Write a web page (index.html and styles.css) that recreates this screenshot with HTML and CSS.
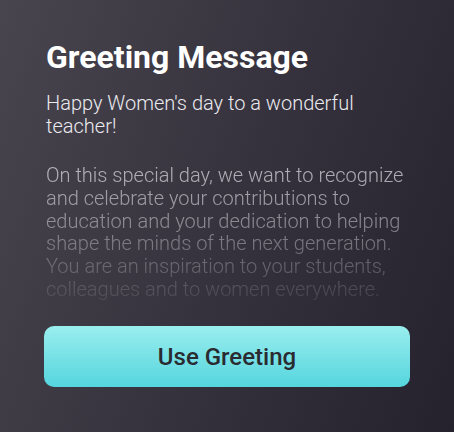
FILE: index.html
```html
<!DOCTYPE html>
<html>
<head>
<meta charset="utf-8">
<link rel="stylesheet" href="styles.css">
</head>
<body>
<main class="sheet">
  <h1 class="title">Greeting Message</h1>
  <div class="message">
    <p class="lead">Happy Women's day to a wonderful teacher!</p>
    <p class="body">On this special day, we want to recognize and celebrate your contributions to education and your dedication to helping shape the minds of the next generation. You are an inspiration to your students, colleagues and to women everywhere.</p>
  </div>
  <button class="cta">Use Greeting</button>
</main>
</body>
</html>
```
FILE: styles.css
```css
html, body {
  margin: 0;
  padding: 0;
  height: 100%;
}
body {
  background: linear-gradient(110deg, #48454f 0%, #34313c 55%, #25222d 100%);
  font-family: Roboto, "Noto Sans", sans-serif;
  overflow: hidden;
}
.sheet {
  display: flex;
  flex-direction: column;
  padding: 37px 44px 0 44px;
}
.title {
  margin: 0 0 0 2px;
  font-size: 32px;
  font-weight: 700;
  line-height: 40px;
  color: #ffffff;
}
.message {
  margin: 15px 0 0 2px;
}
.lead {
  margin: 0;
  font-size: 20px;
  font-weight: 300;
  line-height: 23px;
  color: #ebeaef;
}
.body {
  margin: 26px 0 0 0;
  font-size: 20px;
  font-weight: 300;
  line-height: 22.8px;
  color: #d6d4dc;
  height: 137px;
  overflow: hidden;
  -webkit-mask-image: linear-gradient(to bottom, rgba(0,0,0,0.8) 0%, rgba(0,0,0,0.55) 40%, rgba(0,0,0,0.12) 100%);
  mask-image: linear-gradient(to bottom, rgba(0,0,0,0.8) 0%, rgba(0,0,0,0.55) 40%, rgba(0,0,0,0.12) 100%);
}
.cta {
  margin-top: 25px;
  height: 61px;
  width: 366px;
  border: none;
  border-radius: 10px;
  background: linear-gradient(to bottom, #9aeeee 0%, #55d5de 100%);
  font-family: Roboto, "Noto Sans", sans-serif;
  font-size: 24px;
  font-weight: 500;
  color: #2a2b31;
}
```
